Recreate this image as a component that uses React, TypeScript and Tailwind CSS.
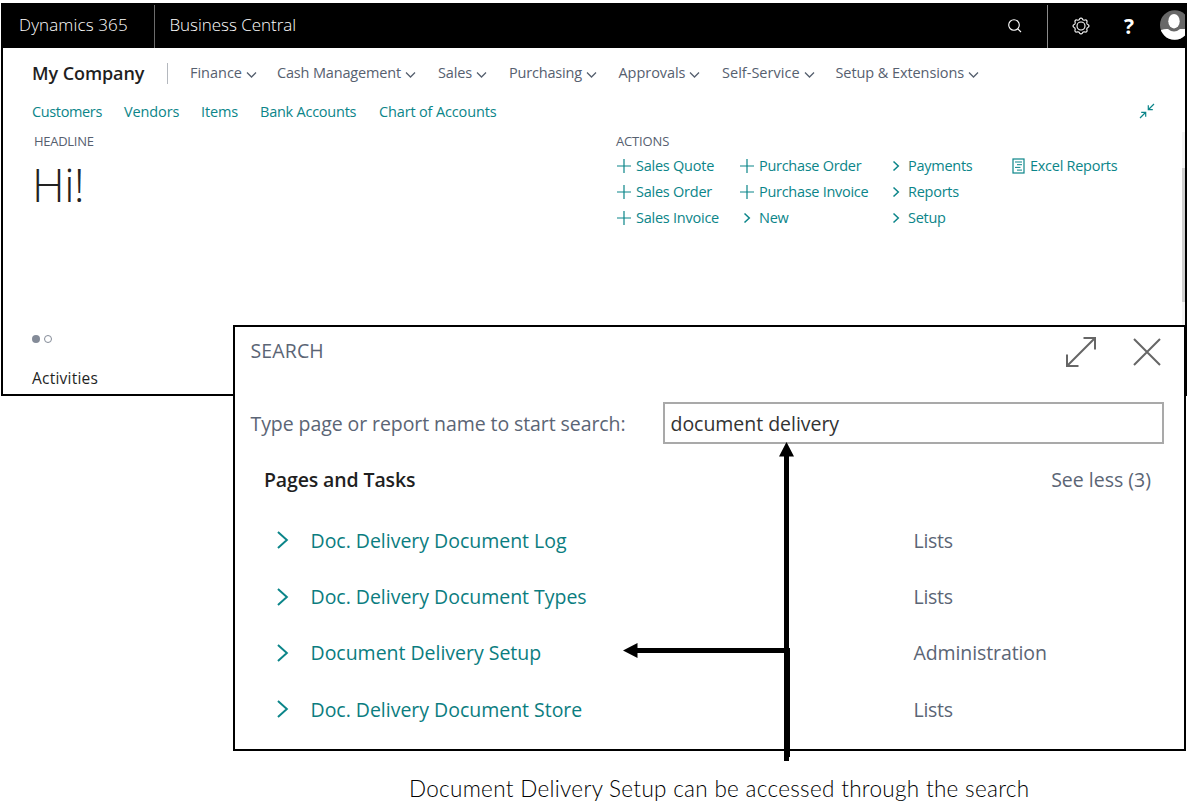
import type { ReactNode } from "react";

const navItems = [
  { label: "Finance", box: "w-[87px]", text: "tracking-[-0.02px]" },
  { label: "Cash Management", box: "w-[161px]", text: "tracking-[-0.17px]" },
  { label: "Sales", box: "w-[71px]", text: "tracking-[-0.14px]" },
  { label: "Purchasing", box: "w-[109.5px]", text: "tracking-[-0.18px]" },
  { label: "Approvals", box: "w-[103.5px]", text: "tracking-[-0.05px]" },
  { label: "Self-Service", box: "w-[113.5px]", text: "tracking-[0.02px]" },
  { label: "Setup & Extensions", box: "w-[150px]", text: "tracking-[-0.08px]" },
];

const links = [
  { label: "Customers", box: "w-[92px]", text: "tracking-[-0.36px]" },
  { label: "Vendors", box: "w-[77px]", text: "tracking-[-0.12px]" },
  { label: "Items", box: "w-[59px]", text: "tracking-[-0.15px]" },
  { label: "Bank Accounts", box: "w-[119px]", text: "tracking-[-0.24px]" },
  { label: "Chart of Accounts", box: "w-[130px]", text: "tracking-[-0.15px]" },
];

type Kind = "plus" | "chevron" | "report";
const actionColumns: { box: string; items: { kind: Kind; label: string }[] }[] = [
  {
    box: "w-[123px] tracking-[-0.24px]",
    items: [
      { kind: "plus", label: "Sales Quote" },
      { kind: "plus", label: "Sales Order" },
      { kind: "plus", label: "Sales Invoice" },
    ],
  },
  {
    box: "w-[149px] tracking-[-0.29px]",
    items: [
      { kind: "plus", label: "Purchase Order" },
      { kind: "plus", label: "Purchase Invoice" },
      { kind: "chevron", label: "New" },
    ],
  },
  {
    box: "w-[122px] tracking-[-0.26px]",
    items: [
      { kind: "chevron", label: "Payments" },
      { kind: "chevron", label: "Reports" },
      { kind: "chevron", label: "Setup" },
    ],
  },
  { box: "w-[120px] tracking-[-0.27px]", items: [{ kind: "report", label: "Excel Reports" }] },
];

const results = [
  { name: "Doc. Delivery Document Log", type: "Lists", typeText: "tracking-[-0.3px]" },
  { name: "Doc. Delivery Document Types", type: "Lists", typeText: "tracking-[-0.3px]" },
  { name: "Document Delivery Setup", type: "Administration", typeText: "tracking-[-0.1px]" },
  { name: "Doc. Delivery Document Store", type: "Lists", typeText: "tracking-[-0.3px]" },
];

function ActionIcon({ kind }: { kind: Kind }) {
  const shapes: Record<Kind, ReactNode> = {
    plus: <path d="M1 8H15M8 1V15" strokeWidth="1.2" />,
    chevron: <path d="M5.5 3.5L10.3 8L5.5 12.5" strokeWidth="1.5" />,
    report: (
      <>
        <rect x="3" y="1" width="11" height="14" strokeWidth="1.2" />
        <path d="M5 4H12M7 6.7H12M5 9.4H10.5M7 12.1H12" strokeWidth="1" />
      </>
    ),
  };
  return (
    <svg className="h-4 w-4 shrink-0" viewBox="0 0 16 16" fill="none" stroke="currentColor">
      {shapes[kind]}
    </svg>
  );
}

function GearIcon() {
  const points = Array.from({ length: 64 }, (_, i) => {
    const a = (i / 64) * Math.PI * 2;
    const r = 7.2 + 0.75 * Math.tanh(2 * Math.cos(a * 8));
    return `${(9 + r * Math.sin(a)).toFixed(2)},${(9 - r * Math.cos(a)).toFixed(2)}`;
  }).join(" ");
  return (
    <svg className="h-[18px] w-[18px]" viewBox="0 0 18 18" fill="none" stroke="currentColor" strokeWidth="1.1">
      <polygon points={points} />
      <circle cx="9" cy="9" r="4" />
    </svg>
  );
}

function TopBar() {
  return (
    <header className="flex h-[43px] bg-black text-[17px] font-light text-white">
      <div className="flex w-[151.5px] items-center border-r border-[#6c6c6c] pb-[3px] pl-[16px] tracking-[0.13px]">
        Dynamics 365
      </div>
      <div className="flex flex-1 items-center pb-[3px] pl-[15px] tracking-[-0.04px]">Business Central</div>
      <div className="flex w-[40px] items-center pb-[2px]">
        <svg className="h-[15px] w-[15px]" viewBox="0 0 15 15" fill="none" stroke="currentColor" strokeWidth="1.1">
          <circle cx="7" cy="7" r="5.3" />
          <path d="M10.8 10.8L14 14" />
        </svg>
      </div>
      <div className="flex w-[138px] items-center border-l border-[#8a8a8a]">
        <div className="ml-[24px] pb-[2px]">
          <GearIcon />
        </div>
        <div className="ml-[33px] w-[12px] pb-[1px] text-center text-[21px] font-bold leading-none text-white">?</div>
        <div className="ml-[25px] mb-[3px] h-[30px] w-[25px] overflow-hidden">
          <svg className="h-[30px] w-[30px]" viewBox="0 0 30 30">
            <clipPath id="avatar">
              <circle cx="14.7" cy="15" r="14.7" />
            </clipPath>
            <g clipPath="url(#avatar)">
              <rect width="30" height="30" fill="#686868" />
              <ellipse cx="14" cy="11.2" rx="5.7" ry="7.2" fill="#fff" />
              <path d="M1 20Q5 18.6 8 19Q14 24 20 19Q25 18.6 29 20V30H1Z" fill="#fff" />
            </g>
          </svg>
        </div>
      </div>
    </header>
  );
}

function RoleCenter() {
  return (
    <section className="flex h-[393px] w-[1186px] flex-col border-2 border-black bg-white text-[14.5px]">
      <TopBar />
      <div className="flex h-[50px] items-center text-[#56606f]">
        <h1 className="w-[135px] pt-px pl-[29px] text-[18px] font-semibold tracking-[-0.08px] whitespace-nowrap text-[#1f1f1f]">My Company</h1>
        <div className="ml-[29px] mr-[22px] h-[21px] w-px shrink-0 bg-[#b4b8be]" />
        {navItems.map((n) => (
          <div key={n.label} className={`flex shrink-0 items-center whitespace-nowrap ${n.box} ${n.text}`}>
            {n.label}
            <svg className="mt-[3px] ml-[4px] h-[8px] w-[11px]" viewBox="0 0 11 8" fill="none" stroke="currentColor" strokeWidth="1.3">
              <path d="M1 1.5L5.5 6L10 1.5" />
            </svg>
          </div>
        ))}
      </div>
      <div className="mt-px flex h-[26px] items-center pl-[29px] text-[#0b8589]">
        {links.map((l) => (
          <div key={l.label} className={`whitespace-nowrap ${l.box} ${l.text}`}>{l.label}</div>
        ))}
        <svg className="ml-auto mr-[30px] mb-[2px] h-[16px] w-[16px]" viewBox="0 0 16 16" fill="none" stroke="currentColor" strokeWidth="1.2">
          <path d="M1 15L6.5 9.5M2.2 9.3H6.7V13.8M15 1L9.5 6.5M9.3 2.2V6.7H13.8" />
        </svg>
      </div>
      <div className="flex flex-1">
        <div className="w-[613px] pl-[29px]">
          <div className="flex h-[32px] items-center pt-px pl-[2px] text-[13px] tracking-[-0.28px] text-[#56606f]">HEADLINE</div>
          <div className="mt-[-2px] flex h-[58px] items-center text-[45.5px] font-light tracking-[-0.6px] text-[#222]">Hi!</div>
          <div className="mt-[122px] flex gap-[4px] text-[#848b98]">
            <div className="h-2 w-2 rounded-full bg-[#848b98]" />
            <div className="h-2 w-2 rounded-full border border-[#848b98]" />
          </div>
          <div className="mt-[24px] text-[15.5px] leading-[23px] tracking-[0.22px] text-[#1f1f1f]">Activities</div>
        </div>
        <div className="flex-1">
          <div className="flex h-[28px] items-center pt-[5px] text-[13px] tracking-[-0.16px] text-[#56606f]">ACTIONS</div>
          <div className="flex text-[#0b8589]">
            {actionColumns.map((c) => (
              <div key={c.box} className={c.box}>
                {c.items.map((a) => (
                  <div key={a.label} className="flex h-[26px] items-center gap-[4px] whitespace-nowrap">
                    <ActionIcon kind={a.kind} />
                    {a.label}
                  </div>
                ))}
              </div>
            ))}
          </div>
        </div>
        <div className="mt-[7px] w-[3px] bg-[#f3f3f3] pt-[36px]">
          <div className="h-[134px] bg-[#cfcfcf]" />
        </div>
      </div>
    </section>
  );
}

function SearchDialog() {
  return (
    <section className="absolute top-[325px] left-[233px] flex h-[426px] w-[953px] flex-col border-2 border-black bg-white text-[19.5px] text-[#5b6575]">
      <div className="flex h-[48px] items-center pl-[15.5px]">
        <div className="flex-1 tracking-[0.13px]">SEARCH</div>
        <svg className="mt-[2px] mr-[35px] h-[32px] w-[32px]" viewBox="0 0 32 32" fill="none" stroke="#666" strokeWidth="2">
          <path d="M2 30L30 2M18.5 2H30V13.5M2 18.5V30H13.5" />
        </svg>
        <svg className="mt-[2px] mr-[22px] h-[28px] w-[30px]" viewBox="0 0 30 28" fill="none" stroke="#666" strokeWidth="2">
          <path d="M2 1L28 27M28 1L2 27" />
        </svg>
      </div>
      <div className="mt-[27px] flex h-[42px] items-center pl-[15.5px]">
        <div className="w-[412.5px] pt-[2px] tracking-[-0.08px] whitespace-nowrap">Type page or report name to start search:</div>
        <div className="flex h-[42px] w-[501px] items-center border-2 border-[#a9a9a9] pt-[2px] pl-[5.5px] tracking-[-0.03px] text-[#333]">document delivery</div>
      </div>
      <div className="mt-[20px] flex h-[32px] items-center justify-between pr-[33px] pl-[29px]">
        <h2 className="font-semibold tracking-[-0.13px] text-[#1f1f1f]">Pages and Tasks</h2>
        <span>See less (3)</span>
      </div>
      <div className="mt-[16px] pl-[40px]">
        {results.map((r) => (
          <div key={r.name} className="flex h-[56.4px] items-center">
            <svg className="h-[20px] w-[35.5px] text-[#0b8589]" viewBox="0 0 36 20" fill="none" stroke="currentColor" strokeWidth="2">
              <path d="M3 2L12 10L3 18" />
            </svg>
            <div className="w-[603px] tracking-[-0.02px] text-[#0b7d80]">{r.name}</div>
            <div className={r.typeText}>{r.type}</div>
          </div>
        ))}
      </div>
    </section>
  );
}

export default function App() {
  return (
    <main className="relative h-[801px] w-[1188px] overflow-hidden bg-white pt-[3px] pl-px font-['Open_Sans',sans-serif]">
      <RoleCenter />
      <SearchDialog />
      <p className="absolute top-[774px] left-[409px] font-['Lato',sans-serif] text-[22.5px] leading-[30px] font-light tracking-[0.31px] whitespace-nowrap text-black">
        Document Delivery Setup can be accessed through the search
      </p>
      <svg className="pointer-events-none absolute top-[440px] left-[620px] h-[325px] w-[180px]" viewBox="620 440 180 325">
        <path d="M786.5 442L794 456.5H789V648H790V757H789V761H784V653H637.5V658L623 650.5L637.5 643V648H784V456.5H779Z" />
      </svg>
    </main>
  );
}
